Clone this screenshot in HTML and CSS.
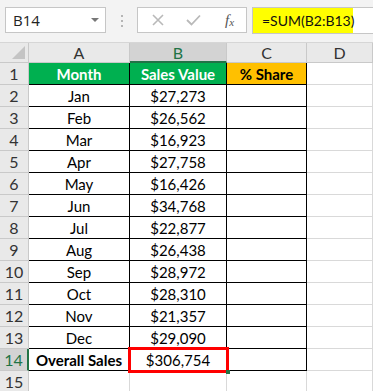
FILE: index.html
```html
<!DOCTYPE html>
<html lang="en">
<head>
<meta charset="UTF-8">
<title>Sales Share</title>
<link rel="stylesheet" href="styles.css">
</head>
<body>

<!-- Formula bar -->
<div class="toolbar">
  <div class="name-box">
    <span>B14</span>
    <span class="drop"></span>
  </div>
  <div class="grip"><i></i><i></i><i></i></div>
  <div class="fx-box">
    <svg width="14" height="12" viewBox="0 0 14 12"><path d="M2 1 L12 11 M12 1 L2 11" stroke="#b9b9b9" stroke-width="1.6" fill="none"/></svg>
    <svg width="15" height="12" viewBox="0 0 15 12"><path d="M1 6 L5.5 10.5 L14 1.5" stroke="#b9b9b9" stroke-width="1.8" fill="none"/></svg>
    <span class="fx">f<sub>x</sub></span>
  </div>
  <div class="formula"><span class="hl">=SUM(B2:B13)</span></div>
</div>

<!-- Sheet -->
<div class="sheet">
  <div class="corner"></div>
  <div class="col-head">A</div>
  <div class="col-head sel">B</div>
  <div class="col-head">C</div>
  <div class="col-head">D</div>

  <div class="row-head">1</div>
  <div class="cell t green">Month</div>
  <div class="cell t green">Sales Value</div>
  <div class="cell t amber">% Share</div>
  <div class="cell"></div>

  <div class="row-head">2</div><div class="cell t">Jan</div><div class="cell t">$27,273</div><div class="cell t"></div><div class="cell"></div>
  <div class="row-head">3</div><div class="cell t">Feb</div><div class="cell t">$26,562</div><div class="cell t"></div><div class="cell"></div>
  <div class="row-head">4</div><div class="cell t">Mar</div><div class="cell t">$16,923</div><div class="cell t"></div><div class="cell"></div>
  <div class="row-head">5</div><div class="cell t">Apr</div><div class="cell t">$27,758</div><div class="cell t"></div><div class="cell"></div>
  <div class="row-head">6</div><div class="cell t">May</div><div class="cell t">$16,426</div><div class="cell t"></div><div class="cell"></div>
  <div class="row-head">7</div><div class="cell t">Jun</div><div class="cell t">$34,768</div><div class="cell t"></div><div class="cell"></div>
  <div class="row-head">8</div><div class="cell t">Jul</div><div class="cell t">$22,877</div><div class="cell t"></div><div class="cell"></div>
  <div class="row-head">9</div><div class="cell t">Aug</div><div class="cell t">$26,438</div><div class="cell t"></div><div class="cell"></div>
  <div class="row-head">10</div><div class="cell t">Sep</div><div class="cell t">$28,972</div><div class="cell t"></div><div class="cell"></div>
  <div class="row-head">11</div><div class="cell t">Oct</div><div class="cell t">$28,310</div><div class="cell t"></div><div class="cell"></div>
  <div class="row-head">12</div><div class="cell t">Nov</div><div class="cell t">$21,357</div><div class="cell t"></div><div class="cell"></div>
  <div class="row-head">13</div><div class="cell t">Dec</div><div class="cell t">$29,090</div><div class="cell t"></div><div class="cell"></div>

  <div class="row-head sel">14</div>
  <div class="cell t bold">Overall Sales</div>
  <div class="cell t active">$306,754<span class="handle"></span></div>
  <div class="cell t"></div>
  <div class="cell"></div>

  <div class="row-head">15</div><div class="cell"></div><div class="cell"></div><div class="cell"></div><div class="cell"></div>
</div>

</body>
</html>
```
FILE: styles.css
```css
/* General */
body {
  margin: 0;
  background: #fff;
  font-family: Lato, "Open Sans", sans-serif;
  color: #000;
  overflow: hidden;
}

/* Formula bar */
.toolbar {
  display: flex;
  align-items: flex-start;
  height: 43px;
  box-sizing: border-box;
  padding-top: 7px;
  background: #f3f3f3;
  border-bottom: 1px solid #d6d6d6;
}

.name-box {
  display: flex;
  align-items: center;
  justify-content: space-between;
  box-sizing: border-box;
  width: 101px;
  height: 26px;
  margin-left: 5px;
  padding: 0 6px 0 7px;
  background: #fff;
  border: 1px solid #c6c6c6;
  font-family: "Open Sans", sans-serif;
  font-size: 15px;
  color: #222;
}

.drop {
  width: 0;
  height: 0;
  border-left: 4px solid transparent;
  border-right: 4px solid transparent;
  border-top: 4px solid #777;
}

.grip {
  display: flex;
  flex-direction: column;
  gap: 3px;
  margin: 8px 0 0 15px;
}

.grip i {
  display: block;
  width: 2px;
  height: 2px;
  background: #b5b5b5;
}

.fx-box {
  display: flex;
  align-items: center;
  box-sizing: border-box;
  width: 110px;
  height: 26px;
  margin-left: 14px;
  padding: 0 6px 0 13px;
  gap: 21px;
  background: #fff;
  border: 1px solid #c6c6c6;
}

.fx {
  font-family: "Liberation Serif", serif;
  font-style: italic;
  font-size: 15px;
  color: #555;
  margin-left: 3px;
}

.fx sub {
  font-size: 11px;
  vertical-align: -1px;
}

.formula {
  flex: 1;
  box-sizing: border-box;
  height: 27px;
  margin-left: 5px;
  background: #fff;
  border: 1px solid #c6c6c6;
  border-right: none;
}

.hl {
  display: inline-block;
  height: 100%;
  width: 100px;
  padding-left: 9px;
  box-sizing: border-box;
  background: #ffff00;
  font-size: 14px;
  line-height: 25px;
  color: #111;
}

/* Sheet grid */
.sheet {
  display: grid;
  grid-template-columns: 29px 101px 97px 80px 1fr;
  grid-template-rows: 20px repeat(14, 22px) 22px;
  font-size: 15px;
}

.corner {
  position: relative;
  background: #e9e9e9;
  border-right: 1px solid #c9c9c9;
  border-bottom: 1px solid #c9c9c9;
}

.corner::after {
  content: "";
  position: absolute;
  right: 3px;
  bottom: 3px;
  border-left: 13px solid transparent;
  border-bottom: 13px solid #c4c4c4;
}

.col-head, .row-head {
  display: flex;
  align-items: center;
  justify-content: center;
  background: #e9e9e9;
  border-right: 1px solid #c9c9c9;
  border-bottom: 1px solid #c9c9c9;
  color: #333;
  font-size: 16px;
}

.col-head.sel {
  background: #d3d3d3;
  color: #217346;
  border-bottom: 2px solid #217346;
}

.row-head.sel {
  background: #d3d3d3;
  color: #217346;
  border-right: 2px solid #217346;
}

.cell {
  display: flex;
  align-items: center;
  justify-content: center;
  border-right: 1px solid #d9d9d9;
  border-bottom: 1px solid #d9d9d9;
  white-space: nowrap;
}

.cell.t {
  border-right-color: #000;
  border-bottom-color: #000;
}

.green {
  background: #00b050;
  color: #fff;
  font-weight: bold;
}

.amber {
  background: #ffc000;
  font-weight: bold;
}

.bold {
  font-weight: bold;
}

/* Active cell */
.active {
  position: relative;
  z-index: 1;
  outline: 3px solid #ff0000;
  outline-offset: -1px;
}

.handle {
  position: absolute;
  right: -4px;
  bottom: -4px;
  width: 4px;
  height: 4px;
  background: #217346;
}
```
